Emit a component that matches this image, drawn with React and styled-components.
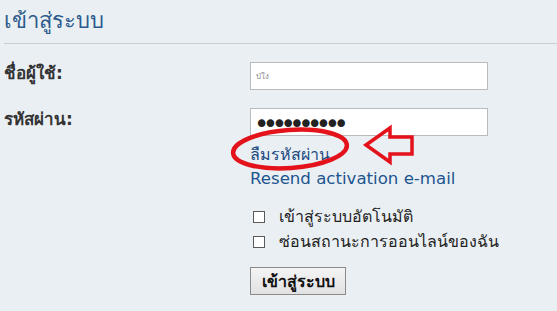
import React from "react";
import styled, { createGlobalStyle } from "styled-components";

const Global = createGlobalStyle`
  html, body { margin: 0; padding: 0; background: #eaeff3; }
  body { font-family: Tahoma, "DejaVu Sans", "Noto Sans", sans-serif; }
`;

const Page = styled.div`
  position: relative;
  width: 557px;
  height: 311px;
  overflow: hidden;
  background: #eaeff3;
`;

const Title = styled.h1`
  margin: 0;
  padding: 6px 0 0 4px;
  height: 43px;
  box-sizing: border-box;
  font-size: 22px;
  font-weight: normal;
  color: #2c5b8c;
  line-height: 30px;
`;

const Rule = styled.hr`
  margin: 0 0 0 4px;
  border: none;
  border-top: 1px solid #c9cdd1;
  height: 0;
`;

const Form = styled.div`
  display: grid;
  grid-template-columns: 246px 300px;
  padding: 18px 0 0 4px;
  row-gap: 18px;
`;

const Label = styled.label`
  font-size: 17px;
  font-weight: bold;
  color: #333;
  align-self: start;
  padding-top: 1px;
  line-height: 20px;
`;

const Input = styled.input`
  box-sizing: border-box;
  width: 238px;
  height: 28px;
  border: 1px solid #b9bcbf;
  background: #fff;
  margin: 0;
  outline: none;
  font-family: "DejaVu Sans", sans-serif;
  color: ${(p) => (p.$faint ? "#8a8a8a" : "#222")};
  font-size: ${(p) => (p.$faint ? "8px" : "26px")};
  letter-spacing: ${(p) => (p.$faint ? "0" : "-6.5px")};
  padding: ${(p) => (p.$faint ? "0 5px" : "3px 3px 0")};
`;

const Field = styled.div`
  display: flex;
  flex-direction: column;
`;

const Links = styled.div`
  grid-column: 2;
  display: flex;
  flex-direction: column;
  align-items: flex-start;
  margin-top: -12px;
`;

const Link = styled.a`
  color: ${(p) => (p.$large ? "#1d558f" : "#1b4a82")};
  font-size: ${(p) => (p.$large ? "16.6px" : "16px")};
  text-decoration: none;
  line-height: ${(p) => (p.$large ? "22px" : "26px")};
  white-space: nowrap;
`;

const Checks = styled.div`
  grid-column: 2;
  display: flex;
  flex-direction: column;
  gap: 6px;
  margin-top: -1px;
`;

const CheckRow = styled.label`
  display: flex;
  align-items: center;
  gap: 14px;
  font-size: 16px;
  line-height: 19px;
  color: #222;
  padding-left: 3px;
  white-space: nowrap;
`;

const Box = styled.span`
  box-sizing: border-box;
  width: 12px;
  height: 12px;
  border: 1px solid #5a5a5a;
  background: #fff;
  flex: none;
`;

const Button = styled.button`
  grid-column: 2;
  justify-self: start;
  box-sizing: border-box;
  width: 96px;
  height: 28px;
  margin-top: -2px;
  border: 1px solid #8a8a8a;
  background: linear-gradient(#f4f4f4, #e2e2e2);
  font-family: inherit;
  font-size: 16px;
  font-weight: bold;
  color: #111;
  padding: 0;
`;

const Overlay = styled.svg`
  position: absolute;
  left: 0;
  top: 0;
  pointer-events: none;
`;

export default function App() {
  return (
    <Page>
      <Global />
      <Title>เข้าสู่ระบบ</Title>
      <Rule />
      <Form>
        <Label>ชื่อผู้ใช้:</Label>
        <Field>
          <Input $faint readOnly value="ป่ใง" />
        </Field>
        <Label>รหัสผ่าน:</Label>
        <Field>
          <Input type="password" readOnly value="1234567890" />
        </Field>
        <Links>
          <Link href="#">ลืมรหัสผ่าน</Link>
          <Link href="#" $large>
            Resend activation e-mail
          </Link>
        </Links>
        <Checks>
          <CheckRow>
            <Box />
            เข้าสู่ระบบอัตโนมัติ
          </CheckRow>
          <CheckRow>
            <Box />
            ซ่อนสถานะการออนไลน์ของฉัน
          </CheckRow>
        </Checks>
        <Button>เข้าสู่ระบบ</Button>
      </Form>
      <Overlay width="557" height="311" viewBox="0 0 557 311">
        <ellipse cx="290" cy="149" rx="57" ry="19" fill="none" stroke="#e3121b" strokeWidth="4.5" transform="rotate(-4 290 149)" />
        <path d="M366 145 L390 128 L390 137 L412 137 L412 154 L390 154 L390 162 Z" fill="none" stroke="#e3121b" strokeWidth="3.5" strokeLinejoin="miter" />
      </Overlay>
    </Page>
  );
}
